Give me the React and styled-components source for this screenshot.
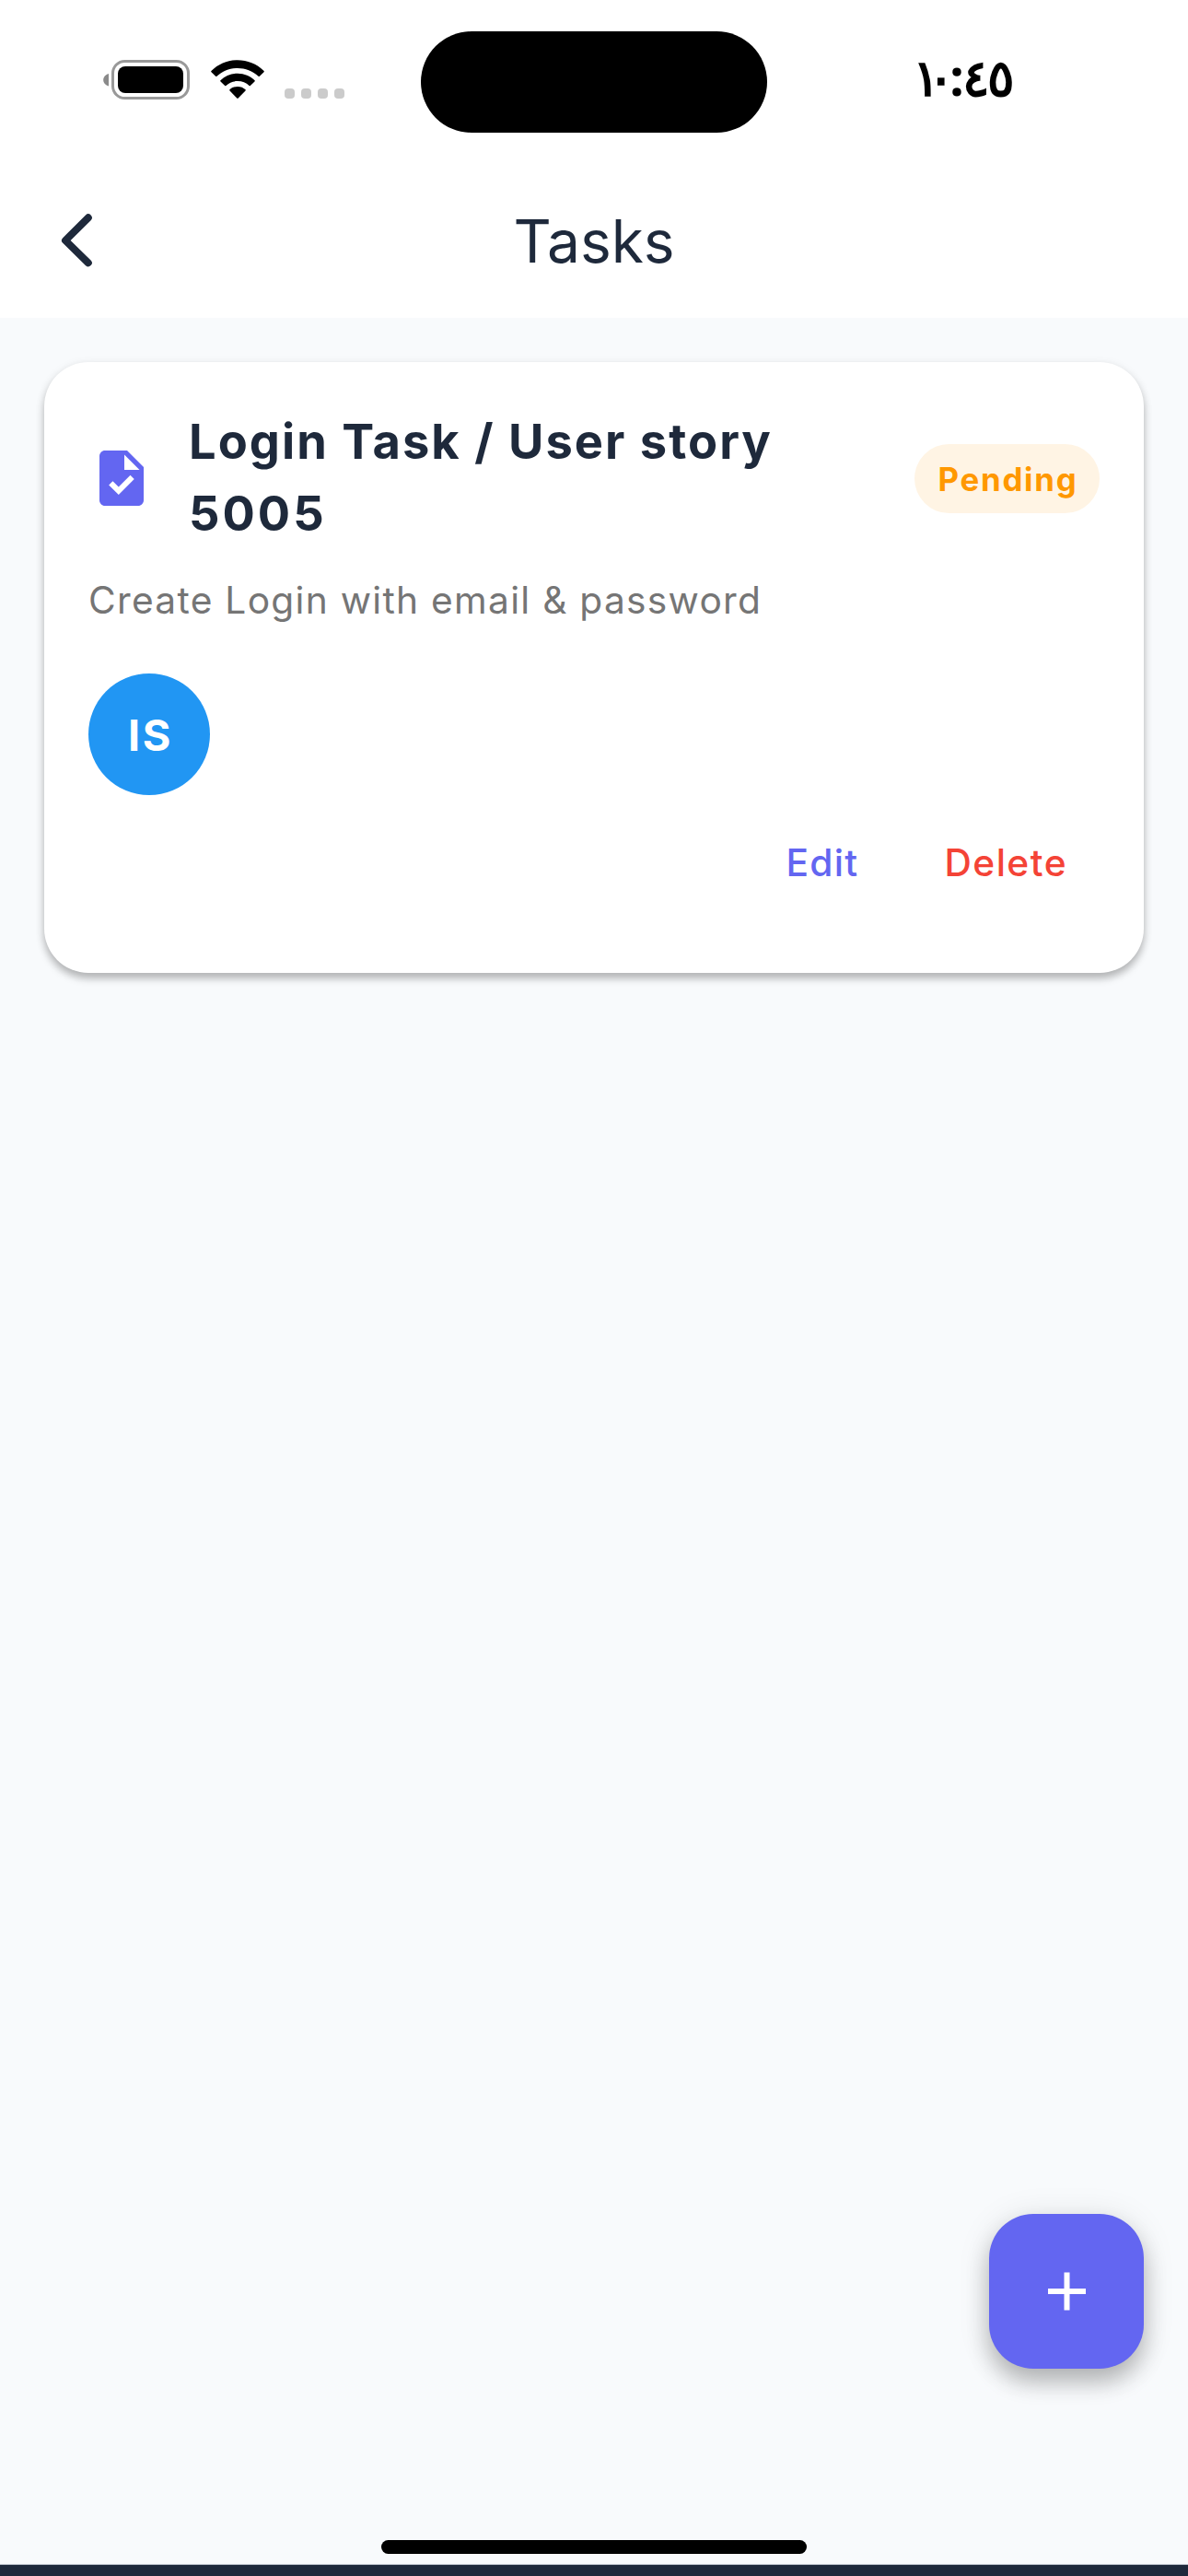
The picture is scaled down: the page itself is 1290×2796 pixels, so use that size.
import React from "react";
import styled, { createGlobalStyle } from "styled-components";

const GlobalStyle = createGlobalStyle`
  *, *::before, *::after { box-sizing: border-box; }
  body { margin: 0; background: #f8fafc; }
  button { font: inherit; border: 0; background: none; margin: 0; padding: 0; }
`;

const Screen = styled.div`
  width: 1290px;
  height: 2796px;
  display: flex;
  flex-direction: column;
  background: #f8fafc;
  color: #1e293b;
  font-family: Inter, "Noto Sans", sans-serif;
  overflow: hidden;
`;

const StatusBar = styled.header`
  height: 177px;
  flex: none;
  display: grid;
  grid-template-columns: 457px 376px 457px;
  align-items: start;
  background: #fff;
`;

const StatusIcons = styled.div`
  display: flex;
  align-items: flex-start;
  padding: 65px 0 0 111px;
`;

const BatteryIcon = styled.svg`
  width: 95px;
  height: 43px;
`;

const WifiIcon = styled.svg`
  width: 58px;
  height: 43px;
  margin-left: 23px;
`;

const SignalDots = styled.div`
  display: flex;
  gap: 7px;
  margin: 31px 0 0 22px;
`;

const SignalDot = styled.span`
  width: 11px;
  height: 11px;
  border-radius: 4px;
  background: #cbcbcb;
`;

const Island = styled.div`
  height: 110.5px;
  margin-top: 33.5px;
  border-radius: 56px;
  background: #000;
`;

const Clock = styled.time`
  display: grid;
  grid-template-columns: 15px 17px 18px 24px 30px;
  padding: 43px 0 0 165px;
  color: #000;
  font: 700 55px/80px "Noto Sans", sans-serif;
`;

const ClockDigit = styled.span`
  display: flex;
  justify-content: center;
`;

const AppBar = styled.nav`
  height: 168px;
  flex: none;
  display: grid;
  grid-template-columns: 168px 1fr 168px;
  align-items: center;
  background: #fff;
`;

const BackButton = styled.button`
  height: 168px;
  display: flex;
  align-items: center;
  padding-left: 48px;
`;

const PageTitle = styled.h1`
  margin: 0;
  padding-top: 2px;
  text-align: center;
  font-size: 64px;
  font-weight: 400;
  line-height: 84px;
`;

const Content = styled.main`
  flex: 1;
  display: flex;
  flex-direction: column;
  padding: 48px 48px 0;
`;

const Card = styled.article`
  display: flex;
  flex-direction: column;
  padding: 48px;
  border-radius: 48px;
  background: #fff;
  box-shadow: 0 6px 9px rgba(0, 0, 0, 0.25), 0 2px 12px rgba(0, 0, 0, 0.07);
`;

const CardHeader = styled.div`
  display: flex;
  align-items: center;
  height: 156px;
`;

const TaskIcon = styled.svg`
  width: 72px;
  height: 72px;
  flex: none;
  fill: #6366f1;
`;

const TaskTitle = styled.h2`
  flex: 1;
  margin: 0 24px 0 37px;
  padding-bottom: 2px;
  font-size: 52.4px;
  font-weight: 700;
  line-height: 78px;
  letter-spacing: 2.04px;
`;

const TaskNumber = styled.span`
  letter-spacing: 3px;
`;

const StatusBadge = styled.span`
  width: 201px;
  height: 75px;
  display: flex;
  align-items: center;
  justify-content: center;
  padding: 1px 0 0 2px;
  border-radius: 38px;
  background: #fff4e4;
  color: #ff9800;
  font-size: 34.8px;
  font-weight: 700;
  letter-spacing: 1.75px;
`;

const Description = styled.p`
  margin: 25px 0 0;
  color: #757575;
  font-size: 40.7px;
  font-weight: 400;
  line-height: 60px;
  letter-spacing: 1.28px;
`;

const Assignees = styled.div`
  display: flex;
  margin-top: 48.5px;
`;

const Avatar = styled.span`
  width: 132px;
  height: 132px;
  display: flex;
  align-items: center;
  justify-content: center;
  padding: 3px 0 0 3px;
  border-radius: 50%;
  background: #2196f3;
  color: #fff;
  font-size: 46.8px;
  font-weight: 700;
  letter-spacing: 2.5px;
`;

const Actions = styled.div`
  display: flex;
  justify-content: flex-end;
  gap: 22px;
  margin-top: 1.5px;
  height: 144px;
`;

const ActionButton = styled.button`
  && {
    padding: 1px 35px 0 36px;
    color: ${(p) => p.$color};
    font-size: 40.7px;
    font-weight: 500;
    line-height: 143px;
    letter-spacing: ${(p) => p.$spacing};
  }
`;

const FabRow = styled.div`
  display: flex;
  justify-content: flex-end;
  margin-top: auto;
  padding-bottom: 186px;
`;

const Fab = styled.button`
  && {
    width: 168px;
    height: 168px;
    display: flex;
    align-items: center;
    justify-content: center;
    border-radius: 48px;
    background: #6366f1;
    box-shadow: 0 15px 24px rgba(0, 0, 0, 0.24), 0 3px 36px rgba(0, 0, 0, 0.1);
  }
`;

const HomeIndicator = styled.div`
  width: 462px;
  height: 15px;
  flex: none;
  align-self: center;
  margin-bottom: 11px;
  border-radius: 8px;
  background: #000;
`;

const BottomStrip = styled.footer`
  height: 13px;
  flex: none;
  border-top: 1px solid #b9bfc8;
  background: #1e293b;
`;

export default function App() {
  return (
    <>
      <GlobalStyle />
      <Screen>
        <StatusBar>
          <StatusIcons>
            <BatteryIcon viewBox="0 0 95 43">
              <path d="M7 15v13.4C3.600 27.400 1.200 25 1.200 21.700S3.600 16 7 15z" fill="#8a8a8a" />
              <rect x="11.500" y="1.500" width="82" height="40" rx="13" fill="none" stroke="#999" strokeWidth="3" />
              <rect x="17" y="7" width="71" height="29" rx="8" fill="#000" />
            </BatteryIcon>
            <WifiIcon viewBox="0 0 58 43">
              <path d="M0.400 12.100C8.400 4.200 18.400 0.300 29 0.300S49.600 4.200 57.600 12.100Q58.100 12.700 57.500 13.300L52.900 17.800Q52.200 18.400 51.600 17.800C45.200 11.800 37.400 8.900 29 8.900S12.800 11.800 6.400 17.800Q5.800 18.400 5.100 17.800L0.500 13.300Q-0.100 12.700 0.400 12.100z" />
              <path d="M10.400 22.200C15.400 17.500 21.700 14.700 29 14.700S42.600 17.500 47.600 22.200Q48.100 22.800 47.500 23.400L42.800 28Q42.200 28.500 41.600 28C38.200 24.900 34 23.100 29 23.100S19.800 24.900 16.400 28Q15.800 28.500 15.200 28L10.500 23.400Q9.900 22.800 10.400 22.200z" />
              <path d="M20.400 32.300C22.700 30.100 25.700 28.900 29 28.900S35.300 30.100 37.600 32.300Q38.100 32.900 37.500 33.500L29.700 41.600Q29 42.300 28.300 41.600L20.500 33.500Q19.900 32.900 20.400 32.300z" />
            </WifiIcon>
            <SignalDots>
              <SignalDot />
              <SignalDot />
              <SignalDot />
              <SignalDot />
            </SignalDots>
          </StatusIcons>
          <Island />
          <Clock>
            {[..."١٠:٤٥"].map((digit, i) => (
              <ClockDigit key={i}>{digit}</ClockDigit>
            ))}
          </Clock>
        </StatusBar>

        <AppBar>
          <BackButton aria-label="Back">
            <svg width="72" height="72" viewBox="0 0 72 72" fill="none" stroke="#1e293b" strokeWidth="8" strokeLinecap="round" strokeLinejoin="round">
              <path d="M47.800 11.300 23 36l24.800 24.300" />
            </svg>
          </BackButton>
          <PageTitle>Tasks</PageTitle>
        </AppBar>

        <Content>
          <Card>
            <CardHeader>
              <TaskIcon viewBox="0 0 24 24">
                <path d="M14 2H6c-1.100 0-1.990.9-1.990 2L4 20c0 1.100.89 2 1.990 2H18c1.100 0 2-.9 2-2V8l-6-6zm-3.060 16L7.400 14.460l1.410-1.410 2.120 2.120 4.240-4.240 1.410 1.410L10.940 18zM13 9V3.500L18.500 9H13z" />
              </TaskIcon>
              <TaskTitle>
                Login Task / User story <TaskNumber>5005</TaskNumber>
              </TaskTitle>
              <StatusBadge>Pending</StatusBadge>
            </CardHeader>
            <Description>Create Login with email &amp; password</Description>
            <Assignees>
              <Avatar>IS</Avatar>
            </Assignees>
            <Actions>
              <ActionButton $color="#6366f1" $spacing="1.300px">Edit</ActionButton>
              <ActionButton $color="#f44336" $spacing="1.460px">Delete</ActionButton>
            </Actions>
          </Card>

          <FabRow>
            <Fab aria-label="Add task">
              <svg width="72" height="72" viewBox="0 0 72 72" stroke="#fff" strokeWidth="6">
                <path d="M36.500 15.500v41M16 36h41" />
              </svg>
            </Fab>
          </FabRow>
        </Content>

        <HomeIndicator />
        <BottomStrip />
      </Screen>
    </>
  );
}
